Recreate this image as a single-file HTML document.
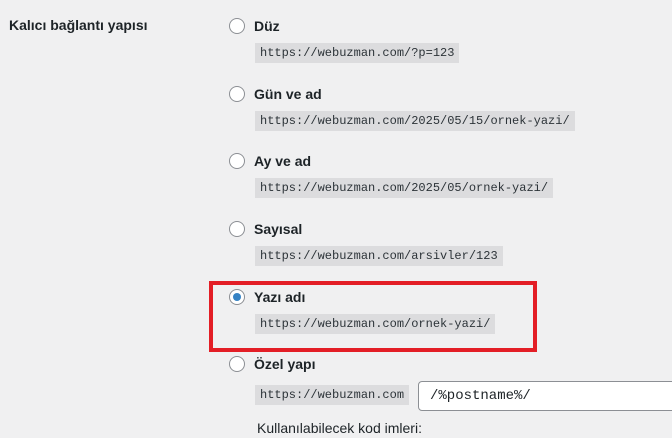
<!DOCTYPE html>
<html><head><meta charset="utf-8"><style>
body{margin:0;width:672px;height:438px;background:#f0f0f1;font-family:"Liberation Sans",sans-serif;color:#1d2327;position:relative;overflow:hidden}
.a{position:absolute}
.th{left:9px;top:17px;font-size:14px;font-weight:bold}
.r{width:14px;height:14px;border:1px solid #8c8f94;border-radius:50%;background:#fff;left:229px}
.r.on::after{content:"";position:absolute;left:3px;top:3px;width:8px;height:8px;border-radius:50%;background:#3582c4}
.l{left:254px;font-size:14px;font-weight:bold}
code{position:absolute;left:255px;height:20px;line-height:20px;padding:0 5px;background:#dcdcde;font-family:"Liberation Mono",monospace;font-size:12px;color:#2c3338}
</style></head><body>
<div class="a th">Kalıcı bağlantı yapısı</div>
<div class="a r" style="top:18px"></div><div class="a l" style="top:18px">Düz</div>
<code style="top:43px">https://webuzman.com/?p=123</code>
<div class="a r" style="top:86px"></div><div class="a l" style="top:86px">Gün ve ad</div>
<code style="top:111px">https://webuzman.com/2025/05/15/ornek-yazi/</code>
<div class="a r" style="top:153px"></div><div class="a l" style="top:153px">Ay ve ad</div>
<code style="top:178px">https://webuzman.com/2025/05/ornek-yazi/</code>
<div class="a r" style="top:221px"></div><div class="a l" style="top:221px">Sayısal</div>
<code style="top:246px">https://webuzman.com/arsivler/123</code>
<div class="a r on" style="top:289px"></div><div class="a l" style="top:289px">Yazı adı</div>
<code style="top:314px">https://webuzman.com/ornek-yazi/</code>
<div class="a" style="left:209px;top:281px;width:320px;height:63px;border:4px solid #e31e26"></div>
<div class="a r" style="top:356px"></div><div class="a l" style="top:356px">Özel yapı</div>
<code style="top:385px">https://webuzman.com</code>
<div class="a" style="left:418px;top:381px;width:270px;height:28px;border:1px solid #8c8f94;border-radius:4px;background:#fff;font-family:'Liberation Mono',monospace;font-size:14px;line-height:28px;padding-left:11px;box-sizing:content-box">/%postname%/</div>
<div class="a" style="left:257px;top:420px;font-size:14px">Kullanılabilecek kod imleri:</div>
</body></html>
